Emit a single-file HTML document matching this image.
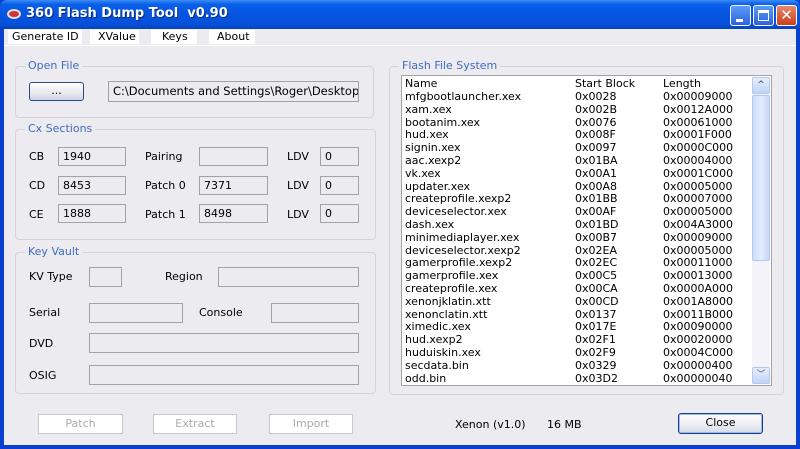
<!DOCTYPE html>
<html><head><style>
*{margin:0;padding:0;box-sizing:border-box}
body{width:800px;height:449px;overflow:hidden;background:#0a3fd0;font-family:"DejaVu Sans","Liberation Sans",sans-serif;font-size:11px;color:#000;position:relative}
.a{position:absolute}
#title{left:0;top:0;width:800px;height:29px;border-radius:7px 7px 0 0;background:linear-gradient(#3b8cf5 0%,#0a5fe8 15%,#0554e0 50%,#0650d8 85%,#0842b8 100%)}
#client{left:4px;top:29px;width:792px;height:416px;background:#ecebef}
.t{color:#fff;font-weight:bold;font-size:13px;font-family:"DejaVu Sans",sans-serif;text-shadow:1px 1px #0a2a80}
.menu{top:30px;height:14px;background:#fff;font-size:11px;padding-left:6px;line-height:14px;white-space:nowrap;overflow:hidden}
.gb{border:1px solid #d5d3d9;border-radius:4px}
.gt{background:#ecebef;color:#3f6bbf;padding:0 3px;font-size:11px}
.f{border:1px solid #a3a3a6;background:#ecebef;padding-left:4px;line-height:17px;font-size:11px}
.lb{font-size:11px}
.btn{border:1px solid #c8c8cc;background:#fff;color:#aaa;text-align:center;line-height:18px}
.xb{width:21px;height:21px;top:5px;border:1px solid #fff;border-radius:3px}
.row{height:12.8px;line-height:12.8px;white-space:nowrap}
</style></head><body>
<div class="a" id="title"></div>
<div class="a" style="left:7px;top:9px;width:14px;height:10px;background:#c33;border-radius:50%;border:2px solid #ddd"></div>
<div class="a t" style="left:26px;top:6px">360 Flash Dump Tool&nbsp; v0.90</div>
<div class="a xb" style="left:730px;background:linear-gradient(#5b9bf8,#2a63de)"><div class="a" style="left:5px;top:13px;width:7px;height:3px;background:#fff"></div></div>
<div class="a xb" style="left:753px;background:linear-gradient(#5b9bf8,#2a63de)"><div class="a" style="left:4px;top:4px;width:11px;height:11px;border:1px solid #fff;border-top-width:3px"></div></div>
<div class="a xb" style="left:776px;background:linear-gradient(#e8876a,#c8401c);color:#fff;font-weight:bold;font-size:15px;text-align:center;line-height:19px">✕</div>
<div class="a" id="client"></div>
<div class="a" style="left:4px;top:45px;width:792px;height:1px;background:#fff"></div>
<div class="a menu" style="left:8px;width:74px;padding-left:4px">Generate ID</div>
<div class="a menu" style="left:90px;width:49px;padding-left:8px">XValue</div>
<div class="a menu" style="left:151px;width:46px;padding-left:11px">Keys</div>
<div class="a menu" style="left:209px;width:46px;padding-left:8px">About</div>

<div class="a gb" style="left:15px;top:66px;width:359px;height:52px"></div>
<div class="a gt" style="left:25px;top:59px">Open File</div>
<div class="a" style="left:29px;top:82px;width:55px;height:19px;border:1px solid #2a4a8a;border-radius:3px;background:linear-gradient(#fff,#e8e8ee 60%,#cdd3e6);text-align:center;line-height:16px">...</div>
<div class="a f" style="left:108px;top:81px;width:251px;height:21px;line-height:19px;font-size:11.5px;overflow:hidden;white-space:nowrap">C:\Documents and Settings\Roger\Desktop</div>

<div class="a gb" style="left:15px;top:129px;width:361px;height:111px"></div>
<div class="a gt" style="left:25px;top:122px">Cx Sections</div>
<div class="a lb" style="left:29px;top:150px">CB</div><div class="a f" style="left:58px;top:147px;width:68px;height:19px">1940</div>
<div class="a lb" style="left:145px;top:150px">Pairing</div><div class="a f" style="left:199px;top:147px;width:69px;height:19px"></div>
<div class="a lb" style="left:287px;top:150px">LDV</div><div class="a f" style="left:320px;top:147px;width:39px;height:19px">0</div>
<div class="a lb" style="left:29px;top:179px">CD</div><div class="a f" style="left:58px;top:176px;width:68px;height:19px">8453</div>
<div class="a lb" style="left:145px;top:179px">Patch 0</div><div class="a f" style="left:199px;top:176px;width:69px;height:19px">7371</div>
<div class="a lb" style="left:287px;top:179px">LDV</div><div class="a f" style="left:320px;top:176px;width:39px;height:19px">0</div>
<div class="a lb" style="left:29px;top:208px">CE</div><div class="a f" style="left:58px;top:204px;width:68px;height:19px">1888</div>
<div class="a lb" style="left:145px;top:208px">Patch 1</div><div class="a f" style="left:199px;top:204px;width:69px;height:19px">8498</div>
<div class="a lb" style="left:287px;top:208px">LDV</div><div class="a f" style="left:320px;top:204px;width:39px;height:19px">0</div>

<div class="a gb" style="left:15px;top:252px;width:361px;height:142px"></div>
<div class="a gt" style="left:25px;top:245px">Key Vault</div>
<div class="a lb" style="left:29px;top:270px">KV Type</div><div class="a f" style="left:89px;top:267px;width:33px;height:20px"></div>
<div class="a lb" style="left:165px;top:270px">Region</div><div class="a f" style="left:218px;top:267px;width:141px;height:20px"></div>
<div class="a lb" style="left:29px;top:306px">Serial</div><div class="a f" style="left:89px;top:303px;width:94px;height:20px"></div>
<div class="a lb" style="left:199px;top:306px">Console</div><div class="a f" style="left:271px;top:303px;width:88px;height:20px"></div>
<div class="a lb" style="left:29px;top:337px">DVD</div><div class="a f" style="left:89px;top:333px;width:270px;height:20px"></div>
<div class="a lb" style="left:29px;top:369px">OSIG</div><div class="a f" style="left:89px;top:365px;width:270px;height:20px"></div>

<div class="a gb" style="left:389px;top:66px;width:395px;height:329px"></div>
<div class="a gt" style="left:399px;top:59px">Flash File System</div>
<div class="a" style="left:401px;top:75px;width:371px;height:311px;background:#fff;border:1px solid #a3a3a6"></div>
<div class="a" style="left:405px;top:78px;width:345px;font-size:11px">
<div class="row" style="position:relative"><span class="a" style="left:0">Name</span><span class="a" style="left:170px">Start Block</span><span class="a" style="left:258px">Length</span></div>
</div>
<div class="a" id="rows" style="left:405px;top:91px;width:345px;font-size:11px"></div>
<div class="a" style="left:752px;top:77px;width:18px;height:307px;background:#f3f3f9"></div>
<div class="a" style="left:752px;top:77px;width:18px;height:17px;border:1px solid #b4c8f0;border-radius:2px;background:linear-gradient(#e6eefc,#c0d4f8);color:#4d6185;font-size:9px;text-align:center;line-height:15px;font-weight:bold">^</div>
<div class="a" style="left:752px;top:95px;width:18px;height:166px;border:1px solid #b4c8f0;border-radius:2px;background:linear-gradient(90deg,#cddcfb,#e4ecfd,#c6d6f9)"></div>
<div class="a" style="left:752px;top:367px;width:18px;height:17px;border:1px solid #b4c8f0;border-radius:2px;background:linear-gradient(#e6eefc,#c0d4f8);color:#4d6185;font-size:9px;text-align:center;line-height:15px">﹀</div>

<div class="a btn" style="left:38px;top:414px;width:85px;height:20px">Patch</div>
<div class="a btn" style="left:153px;top:414px;width:84px;height:20px">Extract</div>
<div class="a btn" style="left:269px;top:414px;width:84px;height:20px">Import</div>
<div class="a" style="left:455px;top:418px">Xenon (v1.0)</div>
<div class="a" style="left:547px;top:418px">16 MB</div>
<div class="a" style="left:678px;top:413px;width:85px;height:21px;border:1px solid #1c3d8c;border-radius:3px;background:linear-gradient(#fff,#ececf2 60%,#d3d9ea);box-shadow:inset 0 0 0 1px #9cb8ec;text-align:center;line-height:18px;font-size:11px">Close</div>

<script>
var d=[["mfgbootlauncher.xex","0x0028","0x00009000"],["xam.xex","0x002B","0x0012A000"],["bootanim.xex","0x0076","0x00061000"],["hud.xex","0x008F","0x0001F000"],["signin.xex","0x0097","0x0000C000"],["aac.xexp2","0x01BA","0x00004000"],["vk.xex","0x00A1","0x0001C000"],["updater.xex","0x00A8","0x00005000"],["createprofile.xexp2","0x01BB","0x00007000"],["deviceselector.xex","0x00AF","0x00005000"],["dash.xex","0x01BD","0x004A3000"],["minimediaplayer.xex","0x00B7","0x00009000"],["deviceselector.xexp2","0x02EA","0x00005000"],["gamerprofile.xexp2","0x02EC","0x00011000"],["gamerprofile.xex","0x00C5","0x00013000"],["createprofile.xex","0x00CA","0x0000A000"],["xenonjklatin.xtt","0x00CD","0x001A8000"],["xenonclatin.xtt","0x0137","0x0011B000"],["ximedic.xex","0x017E","0x00090000"],["hud.xexp2","0x02F1","0x00020000"],["huduiskin.xex","0x02F9","0x0004C000"],["secdata.bin","0x0329","0x00000400"],["odd.bin","0x03D2","0x00000040"]];
var h="";d.forEach(function(r){h+='<div class="row" style="position:relative"><span class="a" style="left:0">'+r[0]+'</span><span class="a" style="left:170px">'+r[1]+'</span><span class="a" style="left:258px">'+r[2]+'</span></div>'});
document.getElementById("rows").innerHTML=h;
</script>
</body></html>
